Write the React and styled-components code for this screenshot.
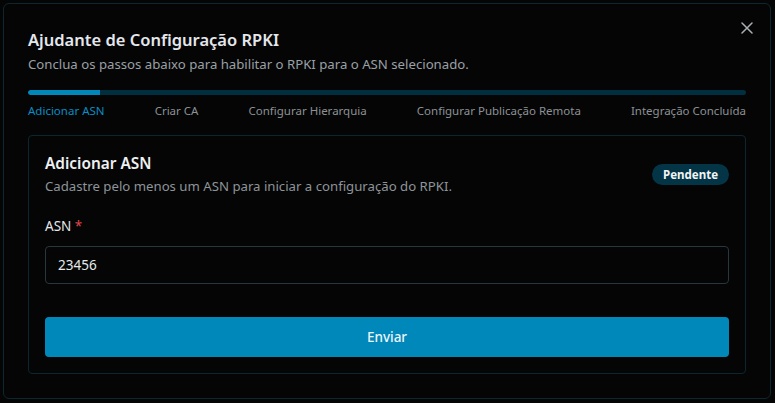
import React, { useState } from "react";
import styled, { createGlobalStyle } from "styled-components";

const GlobalStyle = createGlobalStyle`
  html, body {
    margin: 0;
    padding: 0;
    background: #050505;
  }
  body {
    font-family: "Noto Sans", "Open Sans", sans-serif;
    color: #e6e8ea;
  }
  * {
    box-sizing: border-box;
  }
`;

const Page = styled.div`
  width: 775px;
  height: 403px;
  padding: 3px 4px 4px 3px;
  background: #050505;
`;

const Dialog = styled.div`
  position: relative;
  height: 100%;
  padding: 22px 24px 24px 24px;
  background: #050505;
  border: 1px solid #0d2731;
  border-radius: 6px;
  display: flex;
  flex-direction: column;
`;

const CloseButton = styled.button`
  position: absolute;
  top: 16px;
  right: 15px;
  width: 16px;
  height: 16px;
  padding: 0;
  border: none;
  background: none;
  color: #a9b0b6;
  cursor: pointer;
  display: flex;
  align-items: center;
  justify-content: center;
`;

const Title = styled.h2`
  margin: 0;
  font-size: 16.5px;
  line-height: 28px;
  font-weight: 600;
  color: #e4e8ec;
`;

const Subtitle = styled.p`
  margin: 0;
  font-size: 13.2px;
  line-height: 20px;
  color: #9aa0a6;
`;

const Progress = styled.div`
  margin-top: 16px;
  height: 8px;
  border-radius: 4px;
  background: #022f3f;
  overflow: hidden;
`;

const ProgressFill = styled.div`
  height: 100%;
  background: #0088bb;
  border-radius: 4px 0 0 4px;
`;

const Steps = styled.div`
  margin-top: 8px;
  display: flex;
  justify-content: space-between;
`;

const Step = styled.span`
  font-size: 11.5px;
  line-height: 16px;
  color: ${(p) => (p.$active ? "#0b8cc2" : "#8c9195")};
`;

const Card = styled.div`
  margin-top: 16px;
  padding: 16px;
  border: 1px solid #0c2630;
  border-radius: 4px;
  display: flex;
  flex-direction: column;
`;

const CardHeader = styled.div`
  display: flex;
  align-items: center;
  justify-content: space-between;
`;

const CardTitle = styled.h3`
  margin: 0;
  font-size: 15.4px;
  line-height: 24px;
  font-weight: 600;
  color: #eef0f2;
`;

const CardDesc = styled.p`
  margin: 0;
  font-size: 13.2px;
  line-height: 20px;
  color: #8e9499;
`;

const Badge = styled.span`
  height: 21px;
  padding: 0 11px;
  border-radius: 11px;
  background: #033547;
  color: #f2f4f5;
  font-size: 11.5px;
  font-weight: 700;
  display: inline-flex;
  align-items: center;
`;

const Label = styled.label`
  margin-top: 20px;
  font-size: 13.5px;
  line-height: 20px;
  color: #e6e8ea;
`;

const Required = styled.span`
  color: #e0474c;
`;

const Input = styled.input`
  margin-top: 10px;
  height: 38px;
  padding: 0 12px;
  background: #050505;
  border: 1px solid #28373d;
  border-radius: 4px;
  color: #e6e8ea;
  font-family: inherit;
  font-size: 13.5px;
  outline: none;
`;

const SubmitButton = styled.button`
  margin-top: 33px;
  height: 40px;
  border: none;
  border-radius: 4px;
  background: #0088bb;
  color: #eef6fa;
  font-family: inherit;
  font-size: 13.5px;
  font-weight: 500;
  cursor: pointer;
`;

const steps = [
  "Adicionar ASN",
  "Criar CA",
  "Configurar Hierarquia",
  "Configurar Publicação Remota",
  "Integração Concluída",
];

export default function App() {
  const [asn, setAsn] = useState("23456");
  const current = 0;

  return (
    <Page>
      <GlobalStyle />
      <Dialog>
        <CloseButton aria-label="Fechar">
          <svg width="12" height="12" viewBox="0 0 12 12" fill="none">
            <path
              d="M1 1 L11 11 M11 1 L1 11"
              stroke="currentColor"
              strokeWidth="1.5"
              strokeLinecap="round"
            />
          </svg>
        </CloseButton>
        <Title>Ajudante de Configuração RPKI</Title>
        <Subtitle>
          Conclua os passos abaixo para habilitar o RPKI para o ASN selecionado.
        </Subtitle>
        <Progress>
          <ProgressFill style={{ width: "10%" }} />
        </Progress>
        <Steps>
          {steps.map((s, i) => (
            <Step key={s} $active={i === current}>
              {s}
            </Step>
          ))}
        </Steps>
        <Card>
          <CardHeader>
            <div>
              <CardTitle>Adicionar ASN</CardTitle>
              <CardDesc>
                Cadastre pelo menos um ASN para iniciar a configuração do RPKI.
              </CardDesc>
            </div>
            <Badge>Pendente</Badge>
          </CardHeader>
          <Label htmlFor="asn">
            ASN <Required>*</Required>
          </Label>
          <Input id="asn" value={asn} onChange={(e) => setAsn(e.target.value)} />
          <SubmitButton>Enviar</SubmitButton>
        </Card>
      </Dialog>
    </Page>
  );
}
